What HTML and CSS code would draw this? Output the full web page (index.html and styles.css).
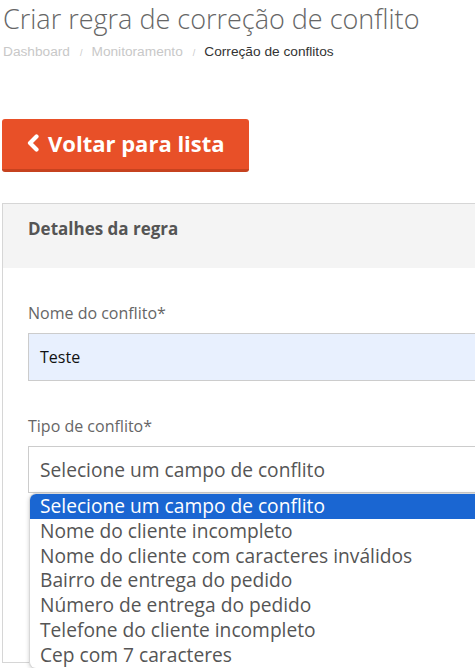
FILE: index.html
```html
<!DOCTYPE html>
<html lang="pt-BR">
<head>
<meta charset="utf-8">
<title>Criar regra de correção de conflito</title>
<link rel="stylesheet" href="styles.css">
</head>
<body>
<div class="page">
  <h1 class="title">Criar regra de correção de conflito</h1>
  <ol class="breadcrumb">
    <li><a href="#">Dashboard</a></li>
    <li class="sep">/</li>
    <li><a href="#">Monitoramento</a></li>
    <li class="sep">/</li>
    <li class="active">Correção de conflitos</li>
  </ol>

  <div class="actions">
    <a class="btn-back" href="#">
      <svg class="chev" width="14" height="18" viewBox="0 0 14 18"><polyline points="10.5,2.5 4,9 10.5,15.5" fill="none" stroke="#fff" stroke-width="4.2" stroke-linecap="round" stroke-linejoin="round"/></svg>
      <span>Voltar para lista</span>
    </a>
  </div>

  <section class="panel">
    <header class="panel-head">Detalhes da regra</header>
    <div class="panel-body">
      <div class="field">
        <label class="label">Nome do conflito*</label>
        <div class="input filled">Teste</div>
      </div>
      <div class="field">
        <label class="label">Tipo de conflito*</label>
        <div class="select">Selecione um campo de conflito</div>
      </div>
    </div>
  </section>
</div>

<ul class="dropdown">
  <li class="opt selected">Selecione um campo de conflito</li>
  <li class="opt">Nome do cliente incompleto</li>
  <li class="opt">Nome do cliente com caracteres inválidos</li>
  <li class="opt">Bairro de entrega do pedido</li>
  <li class="opt">Número de entrega do pedido</li>
  <li class="opt">Telefone do cliente incompleto</li>
  <li class="opt">Cep com 7 caracteres</li>
</ul>
</body>
</html>
```

FILE: styles.css
```css
html, body {
  margin: 0;
  padding: 0;
  overflow: hidden;
  background: #fff;
}
body {
  font-family: "Open Sans", "Noto Sans", sans-serif;
  width: 475px;
  height: 668px;
  position: relative;
}
.page {
  padding-left: 2px;
  width: 473px;
  overflow: hidden;
}
.title {
  margin: 0;
  padding: 3px 0 0 1px;
  font-size: 27px;
  line-height: 32px;
  font-weight: 300;
  color: #666;
  white-space: nowrap;
}
.breadcrumb {
  list-style: none;
  margin: 0;
  padding: 8px 0 0 1px;
  display: flex;
  align-items: center;
  font-family: "Liberation Sans", Arial, sans-serif;
  font-size: 13.7px;
  line-height: 16px;
}
.breadcrumb a {
  color: #c8c8c8;
  text-decoration: none;
}
.breadcrumb .sep {
  color: #c8c8c8;
  font-size: 9px;
  padding: 2px 9px 0 10px;
}
.breadcrumb .active {
  color: #333;
}
.actions {
  padding-top: 58px;
}
.btn-back {
  display: inline-flex;
  align-items: center;
  gap: 8px;
  box-sizing: border-box;
  width: 247px;
  height: 53px;
  padding: 0 0 2px 24px;
  background: #e85028;
  border-bottom: 3px solid #c6421f;
  border-radius: 3px;
  color: #fff;
  text-decoration: none;
  font-weight: 700;
  font-size: 22px;
}
.chev {
  flex: none;
}
.panel {
  margin-top: 31px;
  width: 540px;
  height: 460px;
  box-sizing: border-box;
  border: 1px solid #d6d6d6;
  border-right: none;
  background: #fff;
}
.panel-head {
  background: #f4f4f4;
  height: 64px;
  box-sizing: border-box;
  padding: 14px 0 0 25px;
  font-size: 17px;
  line-height: 22px;
  font-weight: 700;
  color: #555;
}
.panel-body {
  padding: 34px 0 40px 25px;
  display: flex;
  flex-direction: column;
  gap: 34px;
}
.field {
  display: flex;
  flex-direction: column;
  gap: 9px;
}
.label {
  font-size: 16px;
  line-height: 22px;
  color: #666;
}
.input, .select {
  box-sizing: border-box;
  height: 48px;
  border: 1px solid #ccc;
  padding: 0 11px;
  display: flex;
  align-items: center;
  font-size: 16px;
}
.input.filled {
  background: #e8f0fe;
  color: #111;
}
.select {
  height: 47px;
  font-size: 19.2px;
  color: #555;
  background: #fff;
}
.dropdown {
  position: absolute;
  left: 29px;
  top: 493px;
  width: 470px;
  margin: 0;
  padding: 0;
  list-style: none;
  background: #fff;
  border: 1px solid #d8d8d8;
  border-right: none;
  border-radius: 7px 0 0 7px;
  box-shadow: 0 1px 4px rgba(0,0,0,0.18);
  overflow: hidden;
}
.opt {
  height: 24.8px;
  line-height: 24px;
  padding-left: 10px;
  font-size: 19.2px;
  color: #555;
  white-space: nowrap;
}
.opt.selected {
  background: #1a66d2;
  color: #fff;
}
```
